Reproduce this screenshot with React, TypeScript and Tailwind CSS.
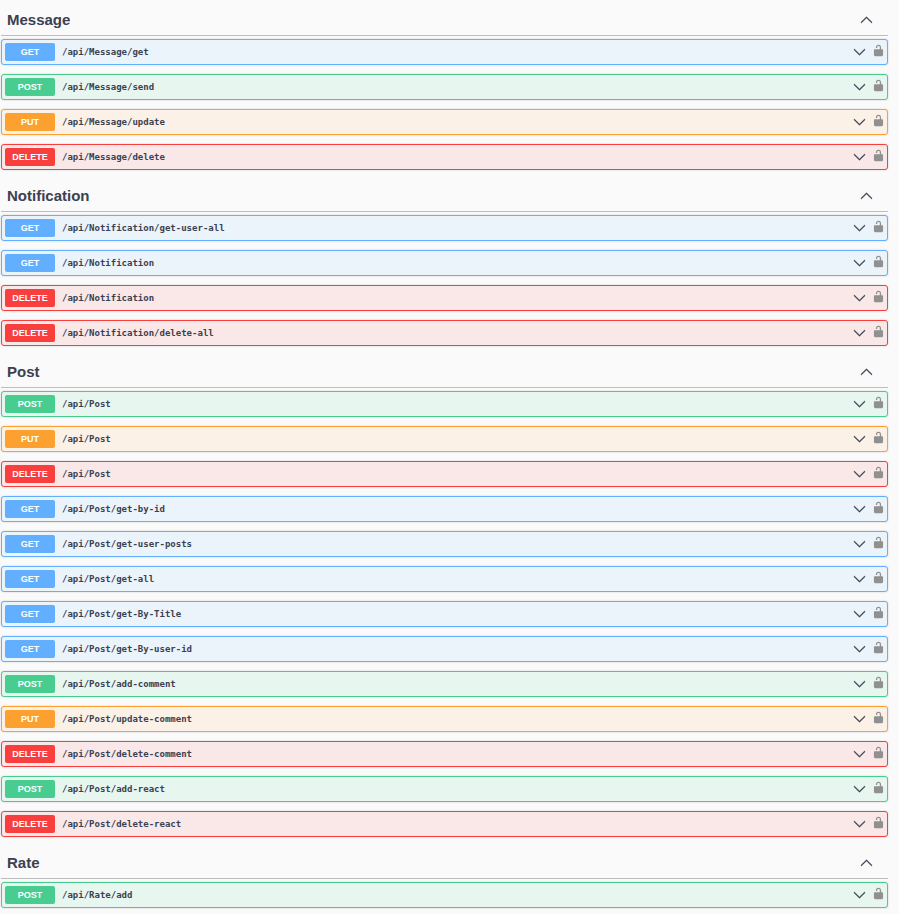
import { clsx } from "clsx";

type Method = "GET" | "POST" | "PUT" | "DELETE";

type Operation = { method: Method; path: string };

const sections: { name: string; operations: Operation[] }[] = [
  {
    name: "Message",
    operations: [
      { method: "GET", path: "/api/Message/get" },
      { method: "POST", path: "/api/Message/send" },
      { method: "PUT", path: "/api/Message/update" },
      { method: "DELETE", path: "/api/Message/delete" },
    ],
  },
  {
    name: "Notification",
    operations: [
      { method: "GET", path: "/api/Notification/get-user-all" },
      { method: "GET", path: "/api/Notification" },
      { method: "DELETE", path: "/api/Notification" },
      { method: "DELETE", path: "/api/Notification/delete-all" },
    ],
  },
  {
    name: "Post",
    operations: [
      { method: "POST", path: "/api/Post" },
      { method: "PUT", path: "/api/Post" },
      { method: "DELETE", path: "/api/Post" },
      { method: "GET", path: "/api/Post/get-by-id" },
      { method: "GET", path: "/api/Post/get-user-posts" },
      { method: "GET", path: "/api/Post/get-all" },
      { method: "GET", path: "/api/Post/get-By-Title" },
      { method: "GET", path: "/api/Post/get-By-user-id" },
      { method: "POST", path: "/api/Post/add-comment" },
      { method: "PUT", path: "/api/Post/update-comment" },
      { method: "DELETE", path: "/api/Post/delete-comment" },
      { method: "POST", path: "/api/Post/add-react" },
      { method: "DELETE", path: "/api/Post/delete-react" },
    ],
  },
  {
    name: "Rate",
    operations: [{ method: "POST", path: "/api/Rate/add" }],
  },
];

const rowStyles: Record<Method, string> = {
  GET: "border-[#61affe] bg-[#ebf3fb]",
  POST: "border-[#49cc90] bg-[#e8f6f0]",
  PUT: "border-[#fca130] bg-[#fbf1e6]",
  DELETE: "border-[#f93e3e] bg-[#fae7e7]",
};

const badgeStyles: Record<Method, string> = {
  GET: "bg-[#61affe]",
  POST: "bg-[#49cc90]",
  PUT: "bg-[#fca130]",
  DELETE: "bg-[#f93e3e]",
};

function Arrow({ up = false }: { up?: boolean }) {
  return (
    <svg
      viewBox="0 0 20 20"
      className={clsx("size-[13px] shrink-0", up && "rotate-180")}
      fill="currentColor"
      stroke="currentColor"
      strokeWidth="0.6"
      aria-hidden="true"
    >
      <path d="M17.418 5.109c.272-.268.709-.268.979 0s.271.701 0 .969l-7.908 7.83a.697.697 0 0 1-.979 0l-7.908-7.83c-.27-.268-.27-.701 0-.969s.709-.268.979 0L10 12.25z" />
    </svg>
  );
}

function Unlocked() {
  return (
    <svg
      viewBox="0 0 20 20"
      className="size-[13px]"
      fill="currentColor"
      aria-hidden="true"
    >
      <path d="M15.8 8H14V5.6C14 2.703 12.665 1 10 1 7.334 1 6 2.703 6 5.6V6h2v-.801C8 3.754 8.797 3 10 3c1.203 0 2 .754 2 2.199V8H4c-.553 0-1 .646-1 1.199V17c0 .549.428 1.139.951 1.307l1.197.387C5.672 18.861 6.55 19 7.1 19h5.8c.549 0 1.428-.139 1.951-.307l1.196-.387c.524-.167.953-.757.953-1.306V9.199C17 8.646 16.352 8 15.8 8z" />
    </svg>
  );
}

function OperationRow({ method, path }: Operation) {
  return (
    <li
      className={clsx(
        "flex h-[26px] items-center rounded-[3px] border pr-[2px] pl-[3px] shadow-[0_0_2px_rgba(0,0,0,0.19)]",
        rowStyles[method],
      )}
    >
      <button type="button" className="flex min-w-0 flex-1 items-center text-left">
        <span
          className={clsx(
            "w-[50px] shrink-0 rounded-[2px] text-center text-[9px] leading-[18px] font-bold text-white",
            badgeStyles[method],
          )}
        >
          {method}
        </span>
        <span className="min-w-0 flex-1 truncate px-[7px] font-['DejaVu_Sans_Mono',monospace] text-[9px] leading-[18px] font-bold">
          {path}
        </span>
        <Arrow />
      </button>
      <button
        type="button"
        aria-label={`Authorize ${method} ${path}`}
        className="ml-[6px] pb-[3px] text-[#909090]"
      >
        <Unlocked />
      </button>
    </li>
  );
}

export default function App() {
  return (
    <main className="flex min-h-screen flex-col gap-[6px] bg-[#fafafa] pr-[11px] pb-[6px] pl-px font-['Liberation_Sans',Arial,sans-serif] text-[#3b4151]">
      {sections.map((section) => (
        <section key={section.name}>
          <h2 className="border-b border-[#bcbdc0]">
            <button
              type="button"
              aria-expanded="true"
              className="flex h-[35px] w-full items-center justify-between pt-[4px] pr-[15px] pl-[6px] text-[15px] leading-5 font-bold"
            >
              {section.name}
              <Arrow up />
            </button>
          </h2>
          <ul className="mt-[3px] flex flex-col gap-[9px]">
            {section.operations.map((op) => (
              <OperationRow key={op.method + op.path} {...op} />
            ))}
          </ul>
        </section>
      ))}
    </main>
  );
}
